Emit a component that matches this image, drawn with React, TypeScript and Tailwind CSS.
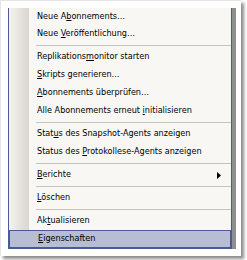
type Item = {
  label: React.ReactNode;
  sep?: boolean;
  arrow?: boolean;
  active?: boolean;
  first?: boolean;
};

const U = ({ children }: { children: React.ReactNode }) => (
  <span className="underline underline-offset-[1px]">{children}</span>
);

// menu entries, sep = separator line drawn above the entry
const items: Item[] = [
  { label: <>Neue A<U>b</U>onnements…</>, first: true },
  { label: <>Neue <U>V</U>eröffentlichung…</> },
  { label: <>Replikations<U>m</U>onitor starten</>, sep: true },
  { label: <><U>S</U>kripts generieren…</> },
  { label: <><U>A</U>bonnements überprüfen…</> },
  { label: <>Alle Abonnements erneut <U>i</U>nitialisieren</> },
  { label: <>Stat<U>u</U>s des Snapshot-Agents anzeigen</>, sep: true },
  { label: <>Status des <U>P</U>rotokollese-Agents anzeigen</> },
  { label: <><U>B</U>erichte</>, sep: true, arrow: true },
  { label: <><U>L</U>öschen</>, sep: true },
  { label: <>Ak<U>t</U>ualisieren</>, sep: true },
  { label: <><U>E</U>igenschaften</>, active: true },
];

const App = () => {
  return (
    <div className="w-[247px] h-[260px] bg-white">
      <div className="w-[241px] h-[256px] bg-white border-t border-l border-[#e4e4e4] shadow-[3px_3px_3px_rgba(0,0,0,0.45)] pl-[7px] pt-[7px]">
        {/* Context menu */}
        <div
          className="w-[224px] flex flex-col border-l border-r border-b border-[#4a5a92] shadow-[4px_0_0_#8e8e8e] bg-[linear-gradient(to_right,#f4f3f0_0px,#d9d6cf_20px,#f8f7f4_20px)] text-[9px] text-black"
          style={{ fontFamily: '"DejaVu Sans Condensed", "Liberation Sans", sans-serif' }}
        >
          {items.map((item, i) => (
            <div key={i} className="flex flex-col">
              {item.sep && (
                <div className="h-[5px] flex items-center pl-[27px]">
                  <div className="h-px w-full bg-[#c6c3ba]" />
                </div>
              )}
              <div
                className={`flex items-center pl-[28px] pr-[8px] ${
                  item.first ? "h-[17px]" : "h-[18px]"
                } ${
                  item.active
                    ? "bg-[#b7bdd3] border border-[#4a5a92] pl-[27px]"
                    : ""
                }`}
              >
                <span className="flex-1 whitespace-nowrap">{item.label}</span>
                {item.arrow && (
                  <svg width="4" height="7" viewBox="0 0 4 7" className="mr-[2px]">
                    <path d="M0 0 L4 3.5 L0 7 Z" fill="#000" />
                  </svg>
                )}
              </div>
            </div>
          ))}
        </div>
      </div>
    </div>
  );
};

export default App;
